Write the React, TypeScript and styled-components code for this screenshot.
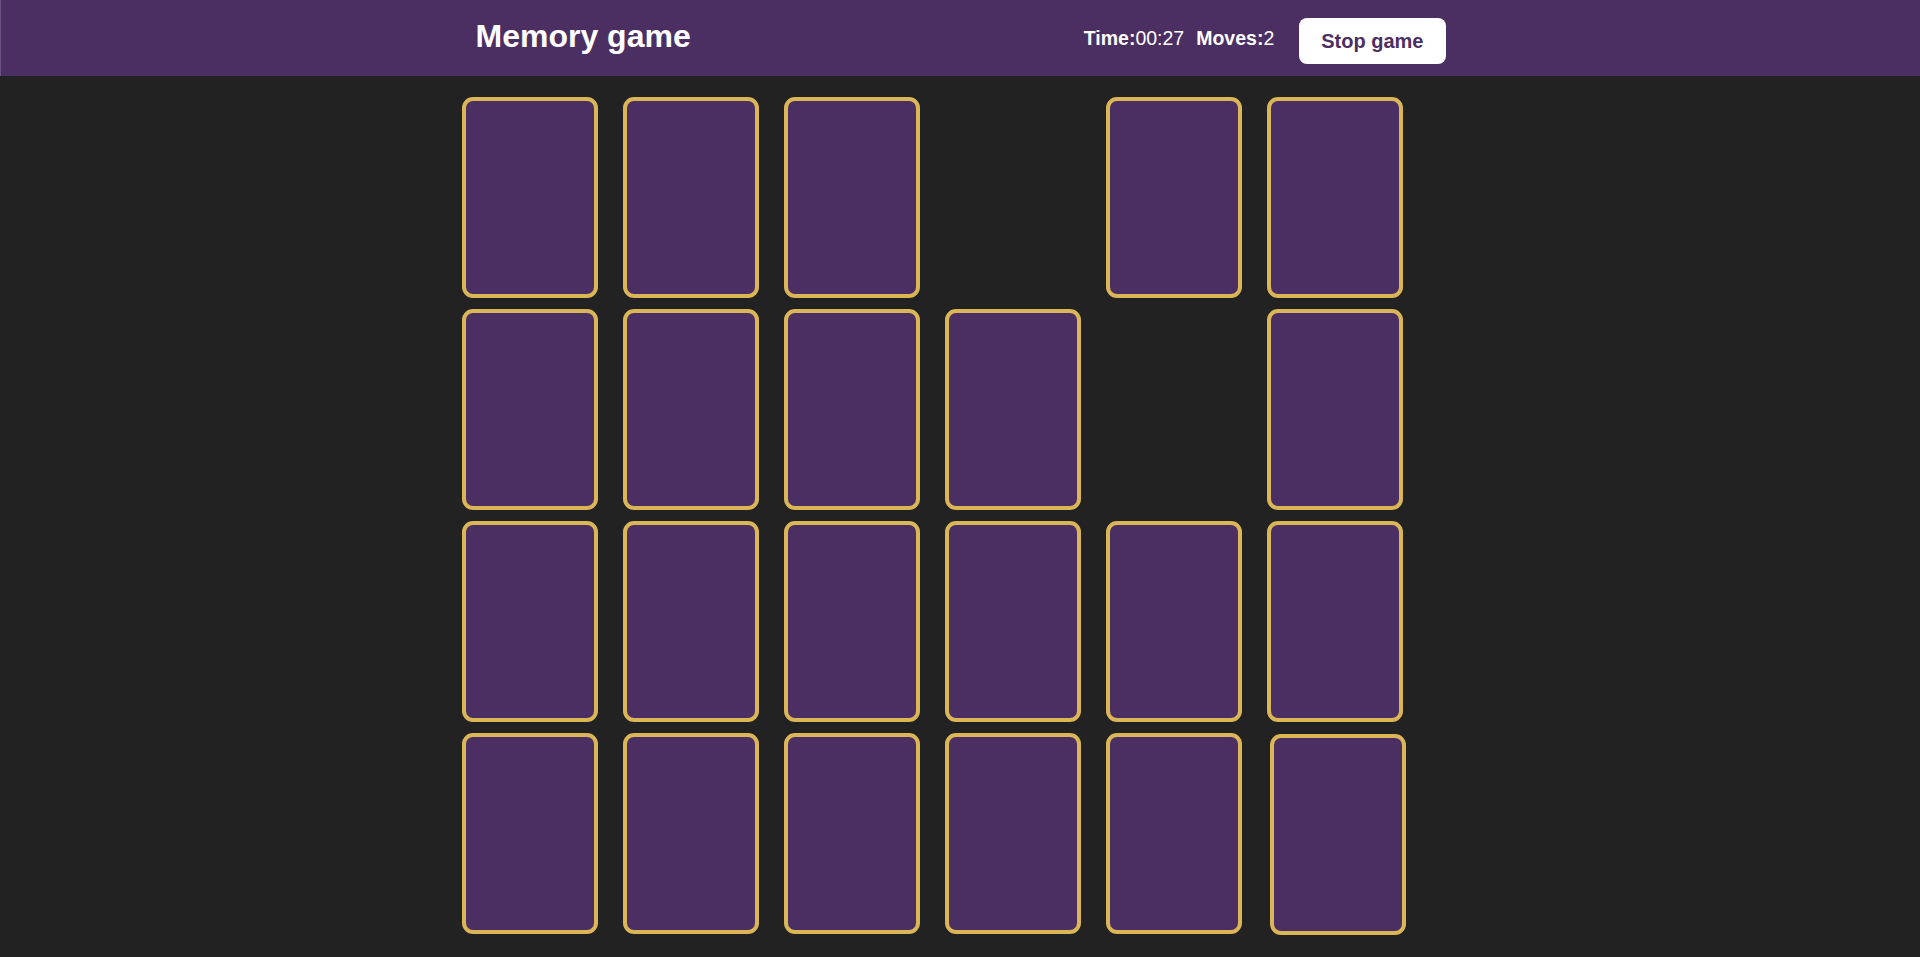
import React from "react";
import styled, { createGlobalStyle } from "styled-components";

const GlobalStyle = createGlobalStyle`
  html, body {
    margin: 0;
    padding: 0;
    background: #222222;
    font-family: "Liberation Sans", Arial, sans-serif;
  }
  * { box-sizing: border-box; }
`;

const Page = styled.div`
  min-height: 957px;
  background: #222222;
`;

const Header = styled.header`
  height: 76px;
  background: #4b2f62;
  border-left: 1px solid #6a5480;
`;

const HeaderInner = styled.div`
  width: 1000px;
  height: 100%;
  margin: 0 auto;
  padding: 0 15px 0 15px;
  display: flex;
  align-items: center;
`;

const Title = styled.h1`
  margin: 0 0 3px 0;
  font-size: 32px;
  font-weight: 700;
  color: #ffffff;
  flex: 1;
`;

const Stat = styled.div<{ $gap: number }>`
  font-size: 19.5px;
  color: #ffffff;
  margin-right: ${(p) => p.$gap}px;
`;

const StatLabel = styled.span`
  font-weight: 700;
`;

const StopButton = styled.button`
  height: 46px;
  padding: 0 22px;
  margin-top: 6px;
  border: none;
  border-radius: 8px;
  background: #ffffff;
  color: #4b2f62;
  font-family: "Liberation Sans", Arial, sans-serif;
  font-size: 20px;
  font-weight: 700;
  cursor: pointer;
`;

const Board = styled.main`
  width: 1000px;
  margin: 0 auto;
  padding: 21px 0 0 2px;
  display: grid;
  grid-template-columns: repeat(6, 136px);
  grid-auto-rows: 201px;
  column-gap: 25px;
  row-gap: 11px;
`;

const Card = styled.div<{ $gone?: boolean; $moving?: boolean }>`
  background: #4b2f62;
  border: 4px solid #dbb656;
  border-radius: 11px;
  visibility: ${(p) => (p.$gone ? "hidden" : "visible")};
  transform: ${(p) => (p.$moving ? "translate(3px, 1px)" : "none")};
  cursor: pointer;
`;

const gone = new Set([3, 10]);

export default function App() {
  const cards = Array.from({ length: 24 }, (_, i) => i);
  return (
    <>
      <GlobalStyle />
      <Page>
        <Header>
          <HeaderInner>
            <Title>Memory game</Title>
            <Stat $gap={12}>
              <StatLabel>Time:</StatLabel>00:27
            </Stat>
            <Stat $gap={25}>
              <StatLabel>Moves:</StatLabel>2
            </Stat>
            <StopButton>Stop game</StopButton>
          </HeaderInner>
        </Header>
        <Board>
          {cards.map((i) => (
            <Card key={i} $gone={gone.has(i)} $moving={i === 23} />
          ))}
        </Board>
      </Page>
    </>
  );
}
